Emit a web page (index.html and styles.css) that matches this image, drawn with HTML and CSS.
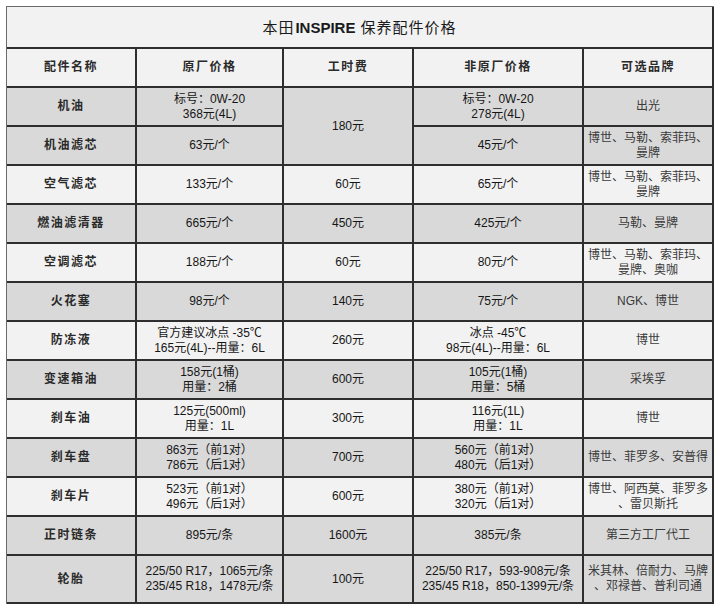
FILE: index.html
```html
<!DOCTYPE html>
<html lang="zh-CN">
<head>
<meta charset="utf-8">
<title>本田INSPIRE 保养配件价格</title>
<link rel="stylesheet" href="styles.css">
</head>
<body>
<table class="price-table">
  <colgroup>
    <col class="c1"><col class="c2"><col class="c3"><col class="c4"><col class="c5">
  </colgroup>
  <tr class="title-row">
    <td colspan="5" class="title">本田<b class="latin">INSPIRE</b> 保养配件价格</td>
  </tr>
  <tr class="head-row light">
    <th>配件名称</th><th>原厂价格</th><th>工时费</th><th>非原厂价格</th><th>可选品牌</th>
  </tr>
  <tr class="gray">
    <td class="name">机油</td>
    <td>标号：0W-20<br>368元(4L)</td>
    <td rowspan="2">180元</td>
    <td>标号：0W-20<br>278元(4L)</td>
    <td class="brand">出光</td>
  </tr>
  <tr class="gray">
    <td class="name">机油滤芯</td>
    <td>63元/个</td>
    <td>45元/个</td>
    <td class="brand">博世、马勒、索菲玛、<br>曼牌</td>
  </tr>
  <tr class="light">
    <td class="name">空气滤芯</td>
    <td>133元/个</td>
    <td>60元</td>
    <td>65元/个</td>
    <td class="brand">博世、马勒、索菲玛、<br>曼牌</td>
  </tr>
  <tr class="gray">
    <td class="name">燃油滤清器</td>
    <td>665元/个</td>
    <td>450元</td>
    <td>425元/个</td>
    <td class="brand">马勒、曼牌</td>
  </tr>
  <tr class="light">
    <td class="name">空调滤芯</td>
    <td>188元/个</td>
    <td>60元</td>
    <td>80元/个</td>
    <td class="brand">博世、马勒、索菲玛、<br>曼牌、奥咖</td>
  </tr>
  <tr class="gray">
    <td class="name">火花塞</td>
    <td>98元/个</td>
    <td>140元</td>
    <td>75元/个</td>
    <td class="brand">NGK、博世</td>
  </tr>
  <tr class="light">
    <td class="name">防冻液</td>
    <td>官方建议冰点 -35℃<br>165元(4L)--用量：6L</td>
    <td>260元</td>
    <td>冰点 -45℃<br>98元(4L)--用量：6L</td>
    <td class="brand">博世</td>
  </tr>
  <tr class="gray">
    <td class="name">变速箱油</td>
    <td>158元(1桶)<br>用量：2桶</td>
    <td>600元</td>
    <td>105元(1桶)<br>用量：5桶</td>
    <td class="brand">采埃孚</td>
  </tr>
  <tr class="light">
    <td class="name">刹车油</td>
    <td>125元(500ml)<br>用量：1L</td>
    <td>300元</td>
    <td>116元(1L)<br>用量：1L</td>
    <td class="brand">博世</td>
  </tr>
  <tr class="gray">
    <td class="name">刹车盘</td>
    <td>863元（前1对）<br>786元（后1对）</td>
    <td>700元</td>
    <td>560元（前1对）<br>480元（后1对）</td>
    <td class="brand">博世、菲罗多、安普得</td>
  </tr>
  <tr class="light">
    <td class="name">刹车片</td>
    <td>523元（前1对）<br>496元（后1对）</td>
    <td>600元</td>
    <td>380元（前1对）<br>320元（后1对）</td>
    <td class="brand">博世、阿西莫、菲罗多<br>、雷贝斯托</td>
  </tr>
  <tr class="gray">
    <td class="name">正时链条</td>
    <td>895元/条</td>
    <td>1600元</td>
    <td>385元/条</td>
    <td class="brand">第三方工厂代工</td>
  </tr>
  <tr class="gray tall">
    <td class="name">轮胎</td>
    <td>225/50 R17，1065元/条<br>235/45 R18，1478元/条</td>
    <td>100元</td>
    <td>225/50 R17，593-908元/条<br>235/45 R18，850-1399元/条</td>
    <td class="brand">米其林、倍耐力、马牌<br>、邓禄普、普利司通</td>
  </tr>
</table>
</body>
</html>
```

FILE: styles.css
```css
html, body {
  margin: 0;
  padding: 0;
  background: #ffffff;
}

body {
  padding: 6px 0 0 6px;
  font-family: "Liberation Sans", Arial, "Noto Sans CJK SC", sans-serif;
  font-size: 12px;
  color: #161616;
}

.price-table {
  border-collapse: separate;
  border-spacing: 0;
  table-layout: fixed;
  width: 708px;
  border-left: 1px solid #6a6a6a;
  border-top: 1px solid #6a6a6a;
}

.c1 { width: 130px; }
.c2 { width: 147px; }
.c3 { width: 130px; }
.c4 { width: 170px; }
.c5 { width: 130px; }

.price-table td,
.price-table th {
  box-sizing: border-box;
  height: 39px;
  padding: 0;
  border-right: 2px solid #2e2e2e;
  border-bottom: 2px solid #2e2e2e;
  text-align: center;
  vertical-align: middle;
  line-height: 15px;
  font-weight: normal;
  white-space: nowrap;
}

.title-row .title {
  height: 42px;
  background: #f2f2f2;
  font-size: 15px;
  color: #1a1a1a;
  letter-spacing: 1px;
  padding-top: 1px;
}

.title .latin {
  font-weight: bold;
  letter-spacing: 0;
  margin-left: 1px;
}

.head-row th {
  font-weight: bold;
  letter-spacing: 1.5px;
  color: #2a2a2a;
}

.light td,
.light th {
  background: #f2f2f2;
}

.gray td {
  background: #d9d9d9;
}

.tall td {
  height: 48px;
}

.name {
  font-weight: bold !important;
  letter-spacing: 1.5px;
  color: #2a2a2a;
}

.brand {
  color: #3a3a3a;
  letter-spacing: 0;
}
```
